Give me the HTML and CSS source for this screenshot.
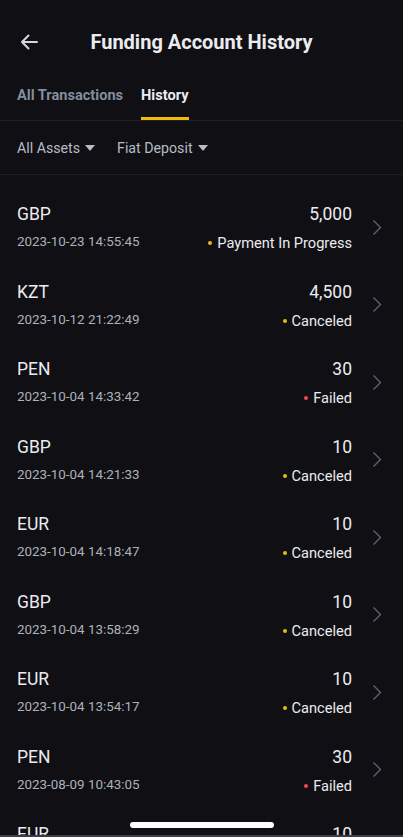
FILE: index.html
```html
<!DOCTYPE html>
<html lang="en">
<head>
  <meta charset="UTF-8" />
  <title>Funding Account History</title>
  <link rel="stylesheet" href="styles.css">
</head>
<body>

  <div class="screen">
    <header class="topbar">
      <svg class="back" width="18" height="16" viewBox="0 0 18 16">
        <path d="M17 8H2M8.5 1.5L2 8l6.5 6.5" fill="none" stroke="#d5d7dc" stroke-width="2" stroke-linecap="round" stroke-linejoin="round"/>
      </svg>
      <h1>Funding Account History</h1>
    </header>

    <nav class="tabs">
      <div class="tab">All Transactions</div>
      <div class="tab active">History</div>
    </nav>

    <div class="filters">
      <div class="filter">All Assets <span class="caret"></span></div>
      <div class="filter">Fiat Deposit <span class="caret"></span></div>
    </div>

    <ul class="list">
      <li class="row">
        <div class="left"><div class="cur">GBP</div><div class="date">2023-10-23 14:55:45</div></div>
        <div class="right"><div class="amt">5,000</div><div class="status"><i class="dot pending"></i>Payment In Progress</div></div>
        <svg class="chev" width="10" height="17" viewBox="0 0 10 17"><path d="M1.5 1.5l7 7-7 7" fill="none" stroke="#5e6673" stroke-width="1.3"/></svg>
      </li>
      <li class="row">
        <div class="left"><div class="cur">KZT</div><div class="date">2023-10-12 21:22:49</div></div>
        <div class="right"><div class="amt">4,500</div><div class="status"><i class="dot pending"></i>Canceled</div></div>
        <svg class="chev" width="10" height="17" viewBox="0 0 10 17"><path d="M1.5 1.5l7 7-7 7" fill="none" stroke="#5e6673" stroke-width="1.3"/></svg>
      </li>
      <li class="row">
        <div class="left"><div class="cur">PEN</div><div class="date">2023-10-04 14:33:42</div></div>
        <div class="right"><div class="amt">30</div><div class="status"><i class="dot failed"></i>Failed</div></div>
        <svg class="chev" width="10" height="17" viewBox="0 0 10 17"><path d="M1.5 1.5l7 7-7 7" fill="none" stroke="#5e6673" stroke-width="1.3"/></svg>
      </li>
      <li class="row">
        <div class="left"><div class="cur">GBP</div><div class="date">2023-10-04 14:21:33</div></div>
        <div class="right"><div class="amt">10</div><div class="status"><i class="dot pending"></i>Canceled</div></div>
        <svg class="chev" width="10" height="17" viewBox="0 0 10 17"><path d="M1.5 1.5l7 7-7 7" fill="none" stroke="#5e6673" stroke-width="1.3"/></svg>
      </li>
      <li class="row">
        <div class="left"><div class="cur">EUR</div><div class="date">2023-10-04 14:18:47</div></div>
        <div class="right"><div class="amt">10</div><div class="status"><i class="dot pending"></i>Canceled</div></div>
        <svg class="chev" width="10" height="17" viewBox="0 0 10 17"><path d="M1.5 1.5l7 7-7 7" fill="none" stroke="#5e6673" stroke-width="1.3"/></svg>
      </li>
      <li class="row">
        <div class="left"><div class="cur">GBP</div><div class="date">2023-10-04 13:58:29</div></div>
        <div class="right"><div class="amt">10</div><div class="status"><i class="dot pending"></i>Canceled</div></div>
        <svg class="chev" width="10" height="17" viewBox="0 0 10 17"><path d="M1.5 1.5l7 7-7 7" fill="none" stroke="#5e6673" stroke-width="1.3"/></svg>
      </li>
      <li class="row">
        <div class="left"><div class="cur">EUR</div><div class="date">2023-10-04 13:54:17</div></div>
        <div class="right"><div class="amt">10</div><div class="status"><i class="dot pending"></i>Canceled</div></div>
        <svg class="chev" width="10" height="17" viewBox="0 0 10 17"><path d="M1.5 1.5l7 7-7 7" fill="none" stroke="#5e6673" stroke-width="1.3"/></svg>
      </li>
      <li class="row">
        <div class="left"><div class="cur">PEN</div><div class="date">2023-08-09 10:43:05</div></div>
        <div class="right"><div class="amt">30</div><div class="status"><i class="dot failed"></i>Failed</div></div>
        <svg class="chev" width="10" height="17" viewBox="0 0 10 17"><path d="M1.5 1.5l7 7-7 7" fill="none" stroke="#5e6673" stroke-width="1.3"/></svg>
      </li>
      <li class="row">
        <div class="left"><div class="cur">EUR</div><div class="date">2023-08-09 10:40:12</div></div>
        <div class="right"><div class="amt">10</div><div class="status"><i class="dot pending"></i>Canceled</div></div>
        <svg class="chev" width="10" height="17" viewBox="0 0 10 17"><path d="M1.5 1.5l7 7-7 7" fill="none" stroke="#5e6673" stroke-width="1.3"/></svg>
      </li>
    </ul>

    <div class="home-bar"></div>
  </div>

</body>
</html>
```

FILE: styles.css
```css
html,
body {
  margin: 0;
  padding: 0;
  background-color: #0f0f14;
}

body {
  font-family: Roboto, 'Noto Sans', sans-serif;
  color: #eaecef;
}

.screen {
  position: relative;
  height: 837px;
  overflow: hidden;
  border-bottom: 2px solid #3c3d42;
  box-sizing: border-box;
}

.topbar {
  height: 84px;
  display: flex;
  align-items: center;
  justify-content: center;
  position: relative;
}

.topbar h1 {
  margin: 0;
  font-size: 20px;
  font-weight: 700;
  color: #eaecef;
}

.back {
  position: absolute;
  left: 20px;
  top: 34px;
}

.tabs {
  display: flex;
  gap: 18px;
  padding: 0 17px;
  height: 36px;
  border-bottom: 1px solid #1f2027;
}

.tab {
  font-size: 14.6px;
  font-weight: 700;
  line-height: 20px;
  padding-top: 1px;
  color: #848e9c;
  box-sizing: border-box;
  height: 36px;
  border-bottom: 3px solid transparent;
}

.tab.active {
  color: #eaecef;
  border-bottom-color: #f0b90b;
}

.filters {
  display: flex;
  align-items: center;
  gap: 22px;
  padding: 0 17px;
  height: 53px;
  border-bottom: 1px solid #1f2027;
}

.filter {
  font-size: 14.2px;
  color: #b7bdc6;
  display: flex;
  align-items: center;
  gap: 5px;
}

.caret {
  width: 0;
  height: 0;
  border-left: 5.5px solid transparent;
  border-right: 5.5px solid transparent;
  border-top: 6px solid #b7bdc6;
  margin-top: 1px;
}

.list {
  list-style: none;
  margin: 0;
  padding: 14px 0 0;
}

.row {
  display: flex;
  align-items: center;
  height: 77.5px;
  box-sizing: border-box;
  padding: 14px 21px 15.5px 17px;
}

.left {
  flex: 1;
  align-self: flex-start;
}

.right {
  align-self: flex-start;
  text-align: right;
}

.cur,
.amt {
  font-size: 17.5px;
  line-height: 22px;
  color: #eaecef;
}

.date {
  font-size: 13.4px;
  line-height: 18px;
  margin-top: 8px;
  color: #adb1b8;
}

.status {
  font-size: 14.6px;
  line-height: 18px;
  margin-top: 9px;
  color: #eaecef;
  display: flex;
  align-items: center;
  justify-content: flex-end;
  gap: 5px;
}

.dot {
  width: 4px;
  height: 4px;
  border-radius: 50%;
}

.dot.pending {
  background-color: #f0b90b;
}

.dot.failed {
  background-color: #f6465d;
}

.chev {
  margin-left: 20px;
}

.home-bar {
  position: absolute;
  left: 130px;
  bottom: 7px;
  width: 144px;
  height: 6px;
  border-radius: 3px;
  background-color: #ffffff;
}
```
